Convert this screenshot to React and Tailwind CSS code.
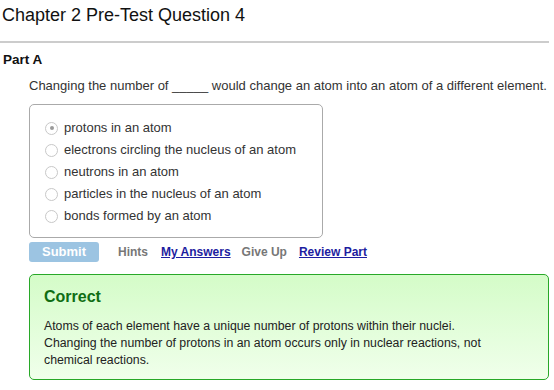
import React from "react";

const choices = [
  "protons in an atom",
  "electrons circling the nucleus of an atom",
  "neutrons in an atom",
  "particles in the nucleus of an atom",
  "bonds formed by an atom",
];

function Radio({ checked }) {
  return (
    <span className="relative inline-flex h-[13px] w-[13px] shrink-0 items-center justify-center rounded-full border border-[#c8c8c8] bg-white">
      {checked && <span className="h-[4px] w-[4px] rounded-full bg-[#9a9a9a]" />}
    </span>
  );
}

export default function App() {
  return (
    <div className="w-[554px] h-[390px] overflow-hidden bg-white text-[#222] font-['Liberation_Sans',Arial,sans-serif]">
      <h1 className="pl-[2px] pt-[3px] text-[18px] leading-[24px] text-[#111]">Chapter 2 Pre-Test Question 4</h1>
      <div className="mt-[14px] mr-[5px] h-[2px] bg-[#cccccc]" />
      <div className="pl-[3px] pt-[9px] text-[13.5px] font-bold leading-[16px] text-[#111]">Part A</div>
      <div className="pl-[29px] pr-[5px]">
        <p className="mt-[10px] text-[13px] leading-[16px] text-[#333]">
          Changing the number of _____ would change an atom into an atom of a different element.
        </p>
        <div className="mt-[10px] w-[294px] rounded-[5px] border border-[#aaaaaa] pl-[15px] pt-[12px] pb-[10px]">
          {choices.map((c, i) => (
            <div key={i} className="flex h-[22px] items-center gap-[6px] text-[13px] text-[#333]">
              <Radio checked={i === 0} />
              <span>{c}</span>
            </div>
          ))}
        </div>
        <div className="mt-[4px] flex items-center text-[12px] font-bold">
          <button className="h-[20px] w-[70px] rounded-[3px] bg-[#9cc4e2] text-[13px] font-bold text-white">Submit</button>
          <span className="ml-[19px] text-[#777]">Hints</span>
          <span className="ml-[13px] text-[#1d1da0] underline">My Answers</span>
          <span className="ml-[11px] text-[#777]">Give Up</span>
          <span className="ml-[12px] text-[#1d1da0] underline">Review Part</span>
        </div>
        <div className="mt-[12px] h-[106px] rounded-[5px] border border-[#28a828] bg-gradient-to-b from-[#d4fcc8] to-[#f0ffeb] pl-[14px] pr-[50px] pt-[12px]">
          <div className="text-[16px] font-bold leading-[20px] text-[#0f6e14]">Correct</div>
          <p className="mt-[11px] text-[12.3px] leading-[17px] text-[#222]">
            Atoms of each element have a unique number of protons within their nuclei. Changing the number of protons in an atom occurs only in nuclear reactions, not chemical reactions.
          </p>
        </div>
      </div>
    </div>
  );
}
